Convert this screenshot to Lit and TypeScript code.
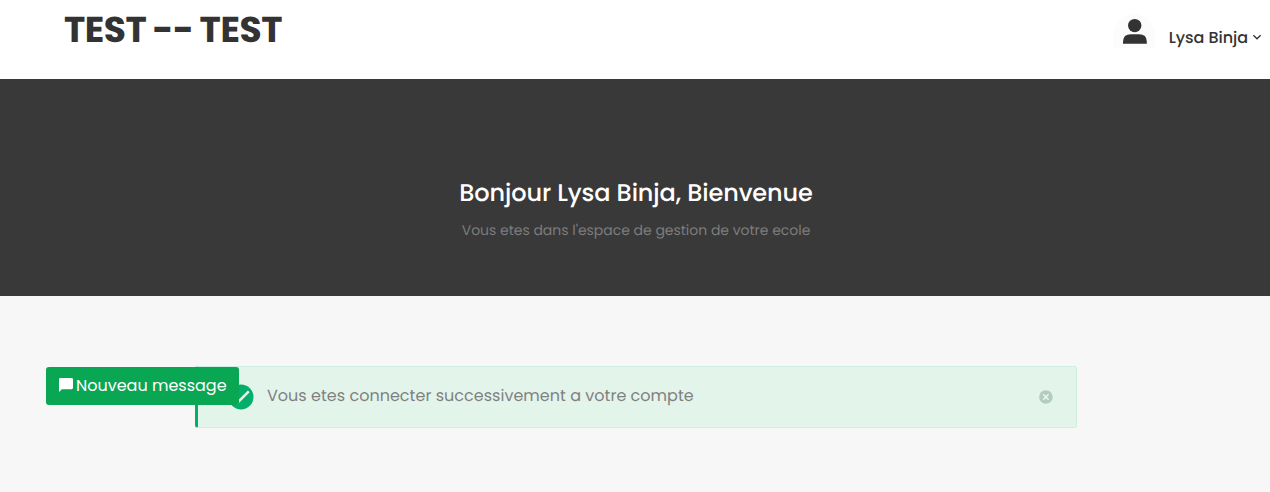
import { LitElement, html, css } from "lit";
import { customElement } from "lit/decorators.js";

@customElement("app-root")
export class AppRoot extends LitElement {
  static styles = css`
    :host { display: block; height: 492px; overflow: hidden; background: #f7f7f7; color: #333;
      font-family: Poppins, Inter, sans-serif; font-feature-settings: "cv11" 1; font-kerning: normal;
      -webkit-font-smoothing: antialiased; text-rendering: geometricPrecision; }
    * { box-sizing: border-box; }
    header { height: 79px; background: #fff; display: flex; justify-content: space-between; padding: 0 8px 0 64px; }
    h1 { margin: 0; padding-top: 8px; font-size: 36px; line-height: 44px; font-weight: 700; letter-spacing: -0.45px; word-spacing: -1px; white-space: pre; }
    .user { display: flex; align-items: flex-start; }
    .avatar { display: block; width: 42px; height: 34px; margin: 14px 14px 0 0; }
    .name { font-size: 16px; line-height: 24px; font-weight: 500; margin-top: 26px; letter-spacing: -0.05px; white-space: nowrap; }
    .chevron { width: 10px; height: 8px; margin: 33px 0 0 4px; }
    .hero { height: 217px; background: #393939; text-align: center; padding: 97px 0 0 2px; }
    h2 { margin: 0; font-size: 24px; line-height: 36px; font-weight: 500; letter-spacing: -0.1px; color: #fff; }
    .sub { margin: 7px 0 0; font-size: 14px; line-height: 22px; letter-spacing: -0.02px; color: #7c7c7c; }
    .content { position: relative; padding: 70px 193px 0 195px; }
    .alert { height: 62px; display: flex; align-items: center; background: #e3f4eb; border: 1px solid #cdeee0;
      border-left: 3px solid #03ae6b; border-radius: 3px; padding: 0 23px 0 30px; }
    .check { width: 26px; height: 26px; margin-right: 13px; }
    .text { font-size: 16px; line-height: 24px; letter-spacing: 0.02px; color: #808080; flex: 1; white-space: nowrap; margin-top: -2px; }
    .close { width: 15px; height: 15px; }
    .message { position: absolute; left: 46px; top: 71px; width: 193px; height: 38px; border: 0; border-radius: 3px;
      background: #09a653; color: #fff; font: inherit; font-size: 16px; padding: 0 0 2px 13px; display: flex; align-items: center; white-space: nowrap; }
    .message svg { width: 14px; height: 14px; margin: 0 3px 0 0; flex: none; }
  `;

  render() {
    return html`
      <header>
        <h1>TEST -- TEST</h1>
        <div class="user">
          <svg class="avatar" viewBox="0 0 42 34"><path d="M0 34V17C4 6 11 0 21 0S38 6 42 17V34Z" fill="#fcfcfc"/><circle cx="21.7" cy="11.6" r="6.7" fill="#333"/><path d="M10 29.8V27.5Q10 20.2 18 20.2H26Q33.8 20.2 33.8 27.5V29.8Z" fill="#333"/></svg>
          <span class="name">Lysa Binja</span>
          <svg class="chevron" viewBox="0 0 10 8"><path d="M1.4 2.2 5 5.8 8.6 2.2" fill="none" stroke="#333" stroke-width="1.3"/></svg>
        </div>
      </header>
      <section class="hero">
        <h2>Bonjour Lysa Binja, Bienvenue</h2>
        <p class="sub">Vous etes dans l'espace de gestion de votre ecole</p>
      </section>
      <main class="content">
        <div class="alert">
          <svg class="check" viewBox="0 0 26 26"><circle cx="13" cy="13" r="12.5" fill="#03ae6b"/><path d="m4.5 14 4.5 5.2L20.8 7.4" fill="none" stroke="#e3f4eb" stroke-width="2.6"/></svg>
          <span class="text">Vous etes connecter successivement a votre compte</span>
          <svg class="close" viewBox="0 0 15 15"><circle cx="7.9" cy="7" r="6.8" fill="#b4cbc0"/><path d="m5.2 4.3 5.4 5.4m0-5.4-5.4 5.4" stroke="#e9f8f0" stroke-width="1.5"/></svg>
        </div>
        <button class="message"><svg viewBox="0 0 14 14"><path d="M1.4 0H12.6Q14 0 14 1.4V9.8Q14 11.2 12.6 11.2H2.8L0 14V1.4Q0 0 1.4 0Z" fill="#fff"/></svg>Nouveau message</button>
      </main>`;
  }
}
